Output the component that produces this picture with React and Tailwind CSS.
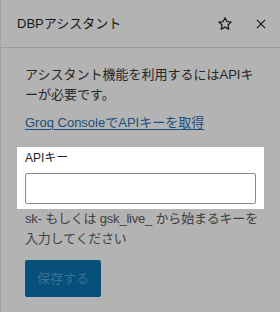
import React from 'react';

const font = { fontFamily: '"Liberation Sans", "Noto Sans CJK JP", sans-serif' };

export default function App() {
  return (
    <div className="w-[280px] h-[312px] bg-[#b3b3b3] border-l border-[#a2a2a2] overflow-hidden" style={font}>
      <div className="h-12 flex items-center justify-between pl-4 pr-3 border-b border-[#9c9c9c]">
        <span className="text-[13px] text-[#161616]">DBPアシスタント</span>
        <div className="flex items-center gap-5">
          <svg width="18" height="18" viewBox="0 0 24 24" fill="none" stroke="#161616" strokeWidth="1.6" strokeLinejoin="round">
            <path d="M12 3.6l2.5 5.2 5.7.7-4.2 3.9 1.1 5.6L12 16.2 6.9 19l1.1-5.6-4.2-3.9 5.7-.7z" />
          </svg>
          <svg width="14" height="14" viewBox="0 0 24 24" fill="none" stroke="#161616" strokeWidth="2.2">
            <path d="M5 5l14 14M19 5L5 19" />
          </svg>
        </div>
      </div>

      <div className="pt-[17px] px-6">
        <p className="text-[13px] leading-5 text-[#262626]">
          アシスタント機能を利用するにはAPIキーが必要です。
        </p>
        <a href="#" className="block mt-2 text-[13px] leading-5 text-[#19507c] underline underline-offset-2">
          Groq ConsoleでAPIキーを取得
        </a>

        <div className="mt-[14px] -mx-2 bg-white px-2 pt-[3px] pb-[5px]">
          <label className="block text-[12px] leading-4 text-[#1e1e1e]">APIキー</label>
          <input
            type="text"
            className="mt-[7px] block w-full h-[31px] border border-[#8a8a8a] rounded-[2px] bg-white outline-none"
          />
        </div>

        <p className="text-[13px] leading-5 text-[#3f3f3f] tracking-[-0.2px] whitespace-nowrap">
          sk- もしくは gsk_live_ から始まるキーを
          <br />
          入力してください
        </p>

        <button className="mt-[11px] w-[76px] h-[37px] rounded-[2px] bg-[#07507c] text-[13px] text-[#3c6f90]">
          保存する
        </button>
      </div>
    </div>
  );
}
